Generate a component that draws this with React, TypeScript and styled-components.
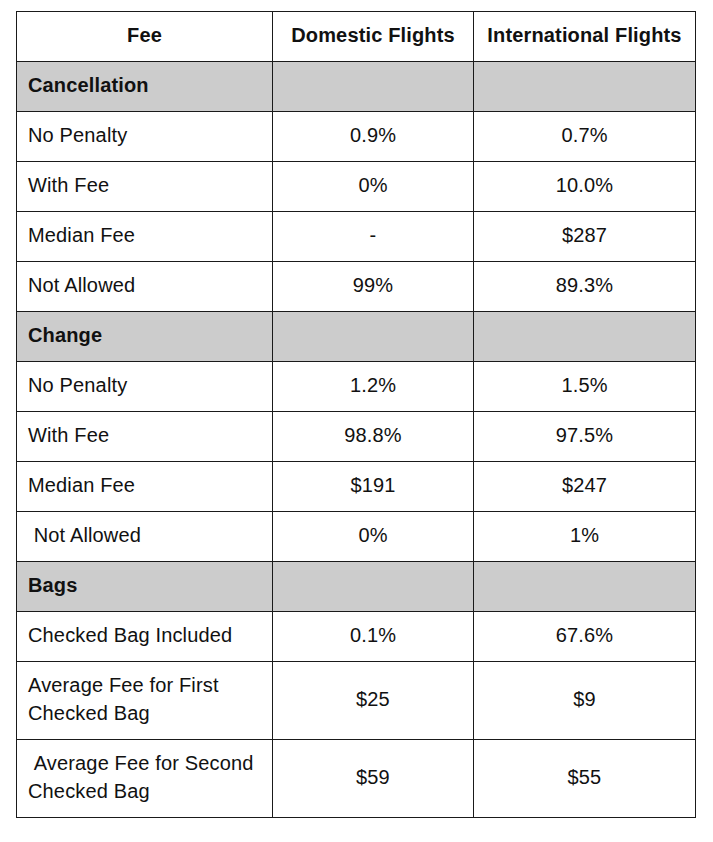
import React from "react";
import styled, { createGlobalStyle } from "styled-components";

const Global = createGlobalStyle`
  html, body { margin: 0; padding: 0; background: #ffffff; }
  body { font-family: "Liberation Sans", Arial, sans-serif; color: #111; }
`;

const Page = styled.div`
  padding: 11px 0 0 16px;
`;

const Grid = styled.div`
  display: grid;
  grid-template-columns: 256px 201px 222px;
  width: max-content;
  border-top: 1px solid #1a1a1a;
  border-left: 1px solid #1a1a1a;
`;

const Cell = styled.div<{ $bold?: boolean; $shade?: boolean; $center?: boolean; $tall?: boolean }>`
  box-sizing: border-box;
  height: ${(p) => (p.$tall ? 78 : 50)}px;
  border-right: 1px solid #1a1a1a;
  border-bottom: 1px solid #1a1a1a;
  background: ${(p) => (p.$shade ? "#cccccc" : "#ffffff")};
  display: flex;
  align-items: center;
  justify-content: ${(p) => (p.$center ? "center" : "flex-start")};
  text-align: ${(p) => (p.$center ? "center" : "left")};
  padding: 0 11px 4px 11px;
  font-size: 20px;
  line-height: 28px;
  letter-spacing: 0.15px;
  font-weight: ${(p) => (p.$bold ? 700 : 400)};
  white-space: pre-wrap;
  color: #111;
`;

type Row =
  | { kind: "section"; label: string }
  | { kind: "data"; label: string; dom: string; intl: string; tall?: boolean };

const rows: Row[] = [
  { kind: "section", label: "Cancellation" },
  { kind: "data", label: "No Penalty", dom: "0.9%", intl: "0.7%" },
  { kind: "data", label: "With Fee", dom: "0%", intl: "10.0%" },
  { kind: "data", label: "Median Fee", dom: "-", intl: "$287" },
  { kind: "data", label: "Not Allowed", dom: "99%", intl: "89.3%" },
  { kind: "section", label: "Change" },
  { kind: "data", label: "No Penalty", dom: "1.2%", intl: "1.5%" },
  { kind: "data", label: "With Fee", dom: "98.8%", intl: "97.5%" },
  { kind: "data", label: "Median Fee", dom: "$191", intl: "$247" },
  { kind: "data", label: " Not Allowed", dom: "0%", intl: "1%" },
  { kind: "section", label: "Bags" },
  { kind: "data", label: "Checked Bag Included", dom: "0.1%", intl: "67.6%" },
  { kind: "data", label: "Average Fee for First\nChecked Bag", dom: "$25", intl: "$9", tall: true },
  { kind: "data", label: " Average Fee for Second\nChecked Bag", dom: "$59", intl: "$55", tall: true },
];

export default function App() {
  return (
    <>
      <Global />
      <Page>
        <Grid>
          <Cell $bold $center>Fee</Cell>
          <Cell $bold $center>Domestic Flights</Cell>
          <Cell $bold $center>International Flights</Cell>
          {rows.map((r, i) =>
            r.kind === "section" ? (
              <React.Fragment key={i}>
                <Cell $bold $shade>{r.label}</Cell>
                <Cell $shade />
                <Cell $shade />
              </React.Fragment>
            ) : (
              <React.Fragment key={i}>
                <Cell $tall={r.tall}>{r.label}</Cell>
                <Cell $tall={r.tall} $center>{r.dom}</Cell>
                <Cell $tall={r.tall} $center>{r.intl}</Cell>
              </React.Fragment>
            )
          )}
        </Grid>
      </Page>
    </>
  );
}
